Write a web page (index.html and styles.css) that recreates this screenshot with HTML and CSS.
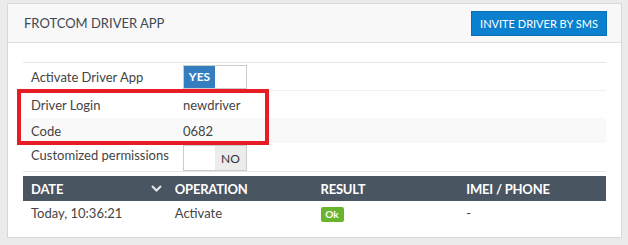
FILE: index.html
```html
<!DOCTYPE html>
<html lang="en">
<head>
  <meta charset="UTF-8">
  <title>Frotcom Driver App</title>
  <link rel="stylesheet" href="styles.css">
</head>
<body>

  <div class="panel">
    <div class="panel-head">
      <h2>FROTCOM DRIVER APP</h2>
      <button class="btn-invite">INVITE DRIVER BY SMS</button>
    </div>

    <div class="panel-body">
      <div class="settings">
        <div class="row r1">
          <span class="label">Activate Driver App</span>
          <span class="toggle on"><b>YES</b><i></i></span>
        </div>
        <div class="row r2">
          <span class="label">Driver Login</span>
          <span class="value">newdriver</span>
        </div>
        <div class="row r3 striped">
          <span class="label">Code</span>
          <span class="value">0682</span>
        </div>
        <div class="row r4">
          <span class="label">Customized permissions</span>
          <span class="toggle off"><i></i><b>NO</b></span>
        </div>
        <!-- highlight drawn over the login rows -->
        <div class="highlight"></div>
      </div>

      <table class="log">
        <thead>
          <tr>
            <th class="sortable">DATE
              <svg class="chev" width="11" height="7" viewBox="0 0 11 7"><path d="M1 1l4.5 4.5L10 1" fill="none" stroke="#e6e9ec" stroke-width="2"/></svg>
            </th>
            <th>OPERATION</th>
            <th>RESULT</th>
            <th>IMEI / PHONE</th>
          </tr>
        </thead>
        <tbody>
          <tr>
            <td>Today, 10:36:21</td>
            <td>Activate</td>
            <td><span class="badge">Ok</span></td>
            <td>-</td>
          </tr>
        </tbody>
      </table>
    </div>
  </div>

</body>
</html>
```

FILE: styles.css
```css
* {
  box-sizing: border-box;
}

body {
  margin: 0;
  padding: 3px 6px 6px 7px;
  background-color: #ebebeb;
  font-family: Lato, "Open Sans", sans-serif;
  font-size: 13px;
  color: #444;
}

.panel {
  background: #fff;
  border: 1px solid #d8d8d8;
}

.panel-head {
  height: 39px;
  display: flex;
  justify-content: space-between;
  align-items: center;
  padding: 0 14px 0 16px;
  background: #f8f8f8;
  border-bottom: 1px solid #dedede;
}

.panel-head h2 {
  margin: 0;
  font-size: 13px;
  font-weight: normal;
  color: #3d4854;
}

.btn-invite {
  height: 25px;
  width: 136px;
  padding: 0;
  border: 1px solid #0a6fb4;
  background-color: #0a80cf;
  color: #fff;
  font-family: inherit;
  font-size: 11px;
  font-weight: normal;
}

.panel-body {
  padding: 19px 15px 12px 15px;
}

.settings {
  position: relative;
  border-top: 1px solid #e6e6e6;
  border-bottom: 1px solid #e6e6e6;
}

.row {
  display: flex;
  align-items: center;
  padding-left: 8px;
}

.row.r1 {
  height: 28px;
  border-bottom: 1px solid #f0f0f0;
}

.row.r2 {
  height: 27px;
}

.row.r3 {
  height: 25px;
}

.row.r4 {
  height: 28px;
  align-items: flex-start;
}

.row.r4 .label {
  margin-top: 4px;
}

.row.striped {
  background: #f9f9f9;
}

.label {
  width: 152px;
}

.value {
  color: #444;
}

.toggle {
  display: flex;
  width: 64px;
  height: 24px;
  border: 1px solid #ccc;
  font-size: 12px;
}

.toggle b,
.toggle i {
  flex: 1;
  display: flex;
  align-items: center;
  justify-content: center;
}

.toggle.on b {
  background: #347dbf;
  color: #fff;
}

.toggle.off b {
  background: #ececec;
  color: #333;
  font-weight: normal;
}

.toggle.off {
  height: 26px;
  margin-top: 2px;
}

.highlight {
  position: absolute;
  left: -6px;
  top: 26px;
  width: 252px;
  height: 56px;
  border: 4px solid #e81c24;
  pointer-events: none;
}

.log {
  width: 100%;
  margin-top: 4px;
  border-collapse: collapse;
  table-layout: fixed;
}

.log th,
.log td {
  padding: 0 6px;
}

.log th:first-child,
.log td:first-child {
  padding-left: 8px;
}

.log th {
  height: 25px;
  background: #4a5562;
  color: #fff;
  font-size: 13px;
  text-align: left;
  letter-spacing: -0.2px;
}

.log th.sortable {
  position: relative;
}

.chev {
  position: absolute;
  right: 7px;
  top: 9px;
}

.log td {
  height: 24px;
  font-size: 13px;
}

.badge {
  display: inline-block;
  width: 23px;
  height: 15px;
  line-height: 15px;
  text-align: center;
  background: #69b42c;
  color: #fff;
  font-size: 10px;
  font-weight: bold;
  border-radius: 2px;
  vertical-align: middle;
}
```
